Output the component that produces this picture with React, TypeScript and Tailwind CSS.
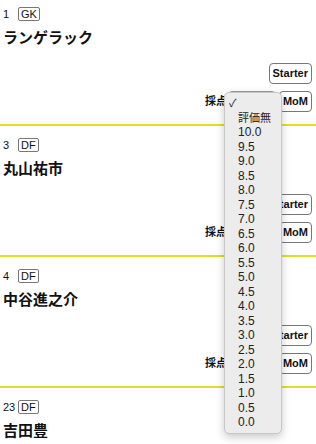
import React from "react";

const players = [
  { no: "1", pos: "GK", name: "ランゲラック" },
  { no: "3", pos: "DF", name: "丸山祐市" },
  { no: "4", pos: "DF", name: "中谷進之介" },
  { no: "23", pos: "DF", name: "吉田豊" },
];

const scores = ["10.0", "9.5", "9.0", "8.5", "8.0", "7.5", "7.0", "6.5", "6.0", "5.5", "5.0", "4.5", "4.0", "3.5", "3.0", "2.5", "2.0", "1.5", "1.0", "0.5", "0.0"];

const font = "font-['Liberation_Sans','Noto_Sans_CJK_JP',sans-serif]";

function PlayerRow({ no, pos, name, first }: { no: string; pos: string; name: string; first: boolean }) {
  return (
    <div className={`${first ? "pt-[7px]" : "pt-[12px]"} border-b-2 border-[#e2dd25] pl-[3px] pb-[12px]`}>
      <div className="flex items-center h-[14px] text-[11px] text-[#111]">
        <span className="w-[15px]">{no}</span>
        <span className="border border-[#777] rounded-[2px] px-[2px] leading-[12px]">{pos}</span>
      </div>
      <div className="mt-[7px] text-[15px] font-bold leading-[20px] text-[#111]">{name}</div>
      <div className="mt-[15px] flex flex-col items-end pr-[4px]">
        <button className="h-[21px] px-[3px] border border-[#777] rounded-[4px] bg-white text-[11px] font-bold text-[#111] leading-none">
          Starter
        </button>
        <div className="mt-[7px] flex items-center">
          <span className="text-[11px] font-bold text-[#111]">採点</span>
          <div className="ml-[1px] w-[48px] h-[21px] border border-[#999] rounded-[4px] bg-white" />
          <button className="ml-[3px] h-[21px] px-[3px] border border-[#777] rounded-[4px] bg-white text-[11px] font-bold text-[#111] leading-none">
            MoM
          </button>
        </div>
      </div>
    </div>
  );
}

export default function App() {
  return (
    <div className={`relative w-[316px] h-[444px] overflow-hidden bg-white ${font}`}>
      {players.map((p, i) => (
        <PlayerRow key={p.no} {...p} first={i === 0} />
      ))}

      {/* open select menu */}
      <div className="absolute left-[224px] top-[92px] w-[58px] py-[3px] bg-[#ececec] border border-[#c6c6c6] rounded-[5px] shadow-[0_3px_8px_rgba(0,0,0,0.22)] text-[12px] text-[#222]">
        <div className="h-[14.5px] leading-[14.5px] pl-[4px] text-[11px]">✓</div>
        <div className="h-[14.5px] leading-[14.5px] pl-[13px] text-[11px]">評価無</div>
        {scores.map((s) => (
          <div key={s} className="h-[14.5px] leading-[14.5px] pl-[13px]">
            {s}
          </div>
        ))}
      </div>
    </div>
  );
}
